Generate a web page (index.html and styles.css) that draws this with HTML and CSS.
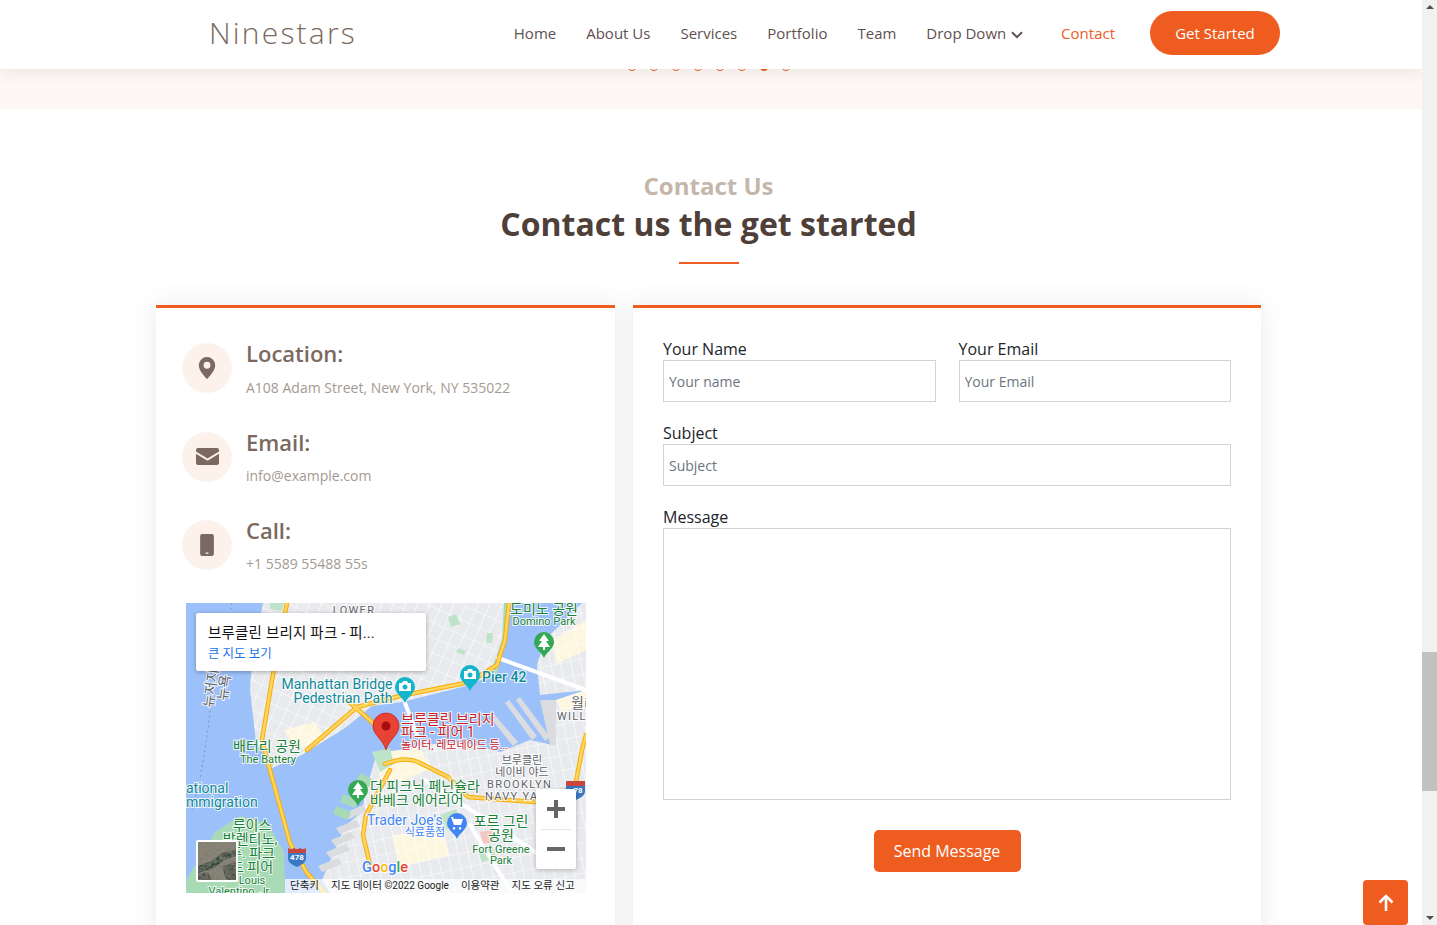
FILE: index.html
```html
<!DOCTYPE html>
<html lang="en">
<head>
  <meta charset="UTF-8" />
  <meta name="viewport" content="width=device-width, initial-scale=1" />
  <title>Ninestars</title>
  <link rel="stylesheet" href="styles.css">
</head>
<body>
  <div class="page">
    <header class="topbar">
      <a class="logo">Ninestars</a>
      <nav class="nav">
        <a>Home</a>
        <a>About Us</a>
        <a>Services</a>
        <a>Portfolio</a>
        <a>Team</a>
        <a class="drop">Drop Down
          <svg viewBox="0 0 12 8" width="12" height="8"><path d="M1 1.2l5 5 5-5" fill="none" stroke="#5f5050" stroke-width="2"/></svg>
        </a>
        <a class="active">Contact</a>
      </nav>
      <a class="get-started">Get Started</a>
    </header>

    <div class="band">
      <div class="dots">
        <i></i><i></i><i></i><i></i><i></i><i></i><i class="on"></i><i></i>
      </div>
    </div>

    <section class="contact">
      <div class="title">
        <h2>Contact Us</h2>
        <p>Contact us the get started</p>
      </div>

      <div class="columns">
        <div class="card info">
          <div class="info-row">
            <div class="circle">
              <svg viewBox="0 0 16 16" width="22" height="22"><path d="M8 16s6-5.686 6-10A6 6 0 0 0 2 6c0 4.314 6 10 6 10zm0-7.5a2.5 2.5 0 1 1 0-5 2.5 2.5 0 0 1 0 5z"/></svg>
            </div>
            <div>
              <h4>Location:</h4>
              <p>A108 Adam Street, New York, NY 535022</p>
            </div>
          </div>
          <div class="info-row">
            <div class="circle">
              <svg viewBox="0 0 23 17" width="23" height="17"><path d="M2 0h19a2 2 0 0 1 2 2v1.5l-11.500 7L0 3.500V2a2 2 0 0 1 2-2zM0 5.800l11.500 7 11.500-7V15a2 2 0 0 1-2 2H2a2 2 0 0 1-2-2z"/></svg>
            </div>
            <div>
              <h4>Email:</h4>
              <p>info@example.com</p>
            </div>
          </div>
          <div class="info-row">
            <div class="circle">
              <svg viewBox="0 0 16 16" width="22" height="22"><path d="M3 1.5A1.5 1.5 0 0 1 4.5 0h7A1.5 1.5 0 0 1 13 1.5v13a1.5 1.5 0 0 1-1.5 1.5h-7A1.5 1.5 0 0 1 3 14.500zM7 13.500v.8h2v-.8z"/></svg>
            </div>
            <div>
              <h4>Call:</h4>
              <p>+1 5589 55488 55s</p>
            </div>
          </div>

          <div class="map">
            <svg class="map-art" viewBox="186 603 400 290" width="400" height="290">
              <defs>
                <pattern id="grid" width="11" height="14" patternUnits="userSpaceOnUse" patternTransform="rotate(24)">
                  <path d="M0 0H11M0 0V14" stroke="#fff" stroke-width="1.2" fill="none"/>
                </pattern>
                <pattern id="gridb" width="10" height="15" patternUnits="userSpaceOnUse" patternTransform="rotate(-12)">
                  <path d="M0 0H10M0 0V15" stroke="#fff" stroke-width="1.2" fill="none"/>
                </pattern>
                <filter id="rough" x="0" y="0" width="100%" height="100%">
                  <feTurbulence type="fractalNoise" baseFrequency="0.35" numOctaves="2" seed="4"/>
                  <feColorMatrix values="0 0 0 0 .2  0 0 0 0 .2  0 0 0 0 .17  1.8 0 0 0 -.5"/>
                  <feComposite in2="SourceGraphic" operator="over"/>
                </filter>
              </defs>
              <rect x="186" y="603" width="400" height="290" fill="#9cc0f9"/>

              <!-- land -->
              <path d="M263 603L252 660L250 690L256 742L272 768L300 756L345 728L372 706L402 702L470 685L497 672L505 640L511 603Z" fill="#e8eaed"/>
              <path d="M586 603H582L545 640L537 665L540 695L586 690V893H330L322 880L345 826L362 812L366 790L376 756L420 745L462 742L500 752L530 740L552 745L556 700L586 690Z" fill="#e8eaed"/>
              <path d="M284 730l30-8 12 16-30 12zM552 640l34-20v30l-30 14zM392 835l50-4 8 24-50 12zM556 700l30-10v14l-24 8zM380 752l40-4 12 20-30 14-22-4z" fill="#fef7e0"/>
              <path d="M263 603L252 660L250 690L256 742L272 768L300 756L345 728L372 706L402 702L470 685L497 672L505 640L511 603Z" fill="url(#grid)"/>
              <path d="M586 603H582L545 640L537 665L540 695L586 690V893H330L322 880L345 826L362 812L366 790L376 756L420 745L462 742L500 752L530 740L552 745L556 700L586 690Z" fill="url(#gridb)"/>
              <path d="M186 893V880L200 858L215 832L240 816L268 824L284 852L285 893Z" fill="#a8dab5"/>

              <!-- piers and yard -->
              <path d="M505 703l4-3 28 36-5 4zM516 700l4-3 30 40-5 4zM490 717l4-3 24 28-5 4zM540 700h16v45h-6z" fill="#dadce0"/>
              <path d="M336 828l20-8 4 6-20 8zM331 840l20-8 4 6-20 8zM326 852l20-8 4 6-20 8zM318 866l20-8 4 6-20 8zM345 813l18-8 4 6-18 8z" fill="#dadce0"/>
              <path d="M343 794l15 6-3 8-15-6zM336 806l15 6-3 8-15-6zM360 773l12 6-3 8-12-6z" fill="#a8dab5"/>

              <!-- parks -->
              <path d="M510 603L505 640L497 672L488 680L502 640L504 603Z" fill="#a8dab5"/>
              <path d="M270 603l14 0-2 8-12-2zM448 617l8-3 4 10-9 3zM487 633l6 0-1 10-6-1zM458 648l8 3-2 4-8-3z" fill="#bfe3c8"/>
              <path d="M372 752l18-4 4 16-14 8zM440 815l16-6 6 16-16 4zM478 850l14-4 4 12-14 4zM262 760l6-4 6 10-6 2z" fill="#bfe3c8"/>
              <path d="M480 832l12-2 3 12-12 2z" fill="#f6c6c2"/>

              <!-- roads -->
              <g fill="none" stroke-linejoin="round" stroke-linecap="round">
                <path d="M498 658L586 690M405 703L417 735M425 780L560 868M470 825L512 893" stroke="#fff" stroke-width="4"/>
                <g stroke="#f9ab00" stroke-width="4.5">
                  <path d="M287 603L272 680L262 740L270 770L290 843L307 873L325 893"/>
                  <path d="M307 750L357 707L400 696L470 682L497 665L505 640L509 603"/>
                  <path d="M347 700L373 723"/>
                  <path d="M385 764Q405 756 418 762L448 777L468 797L535 802L575 787L582 750L586 735"/>
                  <path d="M390 770L366 815L363 835L370 865"/>
                </g>
                <g stroke="#fdd663" stroke-width="2.5">
                  <path d="M287 603L272 680L262 740L270 770L290 843L307 873L325 893"/>
                  <path d="M307 750L357 707L400 696L470 682L497 665L505 640L509 603"/>
                  <path d="M347 700L373 723"/>
                  <path d="M385 764Q405 756 418 762L448 777L468 797L535 802L575 787L582 750L586 735"/>
                  <path d="M390 770L366 815L363 835L370 865"/>
                </g>
              </g>
              <path d="M232 603L212 690L208 730L200 780L192 810" fill="none" stroke="#7f97b8" stroke-width="1" stroke-dasharray="2 3"/>

              <!-- pins -->
              <path d="M470 691c-2-6-10-9-10-16a10 10 0 1 1 20 0c0 7-8 10-10 16z" fill="#12b5cb"/>
              <path d="M464 671h3l1-2h4l1 2h3v8h-12zm6 1.5a2.5 2.5 0 1 0 .01 0z" fill="#fff" fill-rule="evenodd"/>
              <path d="M405 703c-2-6-10-9-10-16a10 10 0 1 1 20 0c0 7-8 10-10 16z" fill="#12b5cb"/>
              <path d="M399 683h3l1-2h4l1 2h3v8h-12zm6 1.5a2.5 2.5 0 1 0 .01 0z" fill="#fff" fill-rule="evenodd"/>
              <path d="M544 658c-2-6-10-9-10-16a10 10 0 1 1 20 0c0 7-8 10-10 16z" fill="#34a853"/>
              <path d="M544 634l-5 7h3l-4 6h5v3h2v-3h5l-4-6h3z" fill="#fff"/>
              <path d="M358 806c-2-6-10-9-10-16a10 10 0 1 1 20 0c0 7-8 10-10 16z" fill="#34a853"/>
              <path d="M358 782l-5 7h3l-4 6h5v3h2v-3h5l-4-6h3z" fill="#fff"/>
              <path d="M457 839c-2-6-10-9-10-16a10 10 0 1 1 20 0c0 7-8 10-10 16z" fill="#4285f4"/>
              <path d="M451 817h2l1 2h9l-2 6h-7zM454 827a1.3 1.3 0 1 0 .01 0zM460 827a1.3 1.3 0 1 0 .01 0z" fill="#fff"/>
              <path d="M386 750c-3-11-13-15-13-24a13 13 0 1 1 26 0c0 9-10 13-13 24z" fill="#ea4335" stroke="#c5221f" stroke-width=".8"/>
              <circle cx="386" cy="726" r="4.5" fill="#a50e0e"/>

              <!-- shields -->
              <path d="M288 849h18v9c0 5-5 7-9 9-4-2-9-4-9-9z" fill="#3b78c4"/>
              <path d="M288 848l3 1.5 3-1.5 3 1.5 3-1.5 3 1.5 3-1.5v5h-18z" fill="#c9453e"/>
              <text class="t shield" x="297" y="860">478</text>
              <path d="M566 782h19v9c0 5-5 7-9 9-4-2-10-4-10-9z" fill="#3b78c4"/>
              <path d="M566 781h19v5h-19z" fill="#c9453e"/>
              <text class="t shield" x="578" y="793">78</text>

              <!-- labels -->
              <g class="t">
                <text class="grey spaced" x="354" y="614" text-anchor="middle">LOWER</text>
                <text class="green big" x="544" y="614" text-anchor="middle">도미노 공원</text>
                <text class="green small" x="544" y="625" text-anchor="middle">Domino Park</text>
                <text class="teal bold" x="482" y="682">Pier 42</text>
                <text class="teal" x="337" y="689" text-anchor="middle">Manhattan Bridge</text>
                <text class="teal" x="343" y="703" text-anchor="middle">Pedestrian Path</text>
                <text class="grey big" transform="translate(213 708) rotate(-82)">뉴저지</text>
                <text class="grey big" transform="translate(227 701) rotate(-82)">뉴욕</text>
                <text class="red big" x="401" y="724">브루클린 브리지</text>
                <text class="red big" x="401" y="737">파크 - 피어 1</text>
                <text class="red tiny" x="401" y="749">놀이터, 레모네이드 등...</text>
                <text class="green big" x="267" y="751" text-anchor="middle">배터리 공원</text>
                <text class="green small" x="268" y="763" text-anchor="middle">The Battery</text>
                <text class="grey big" x="571" y="708">월리</text>
                <text class="grey spaced" x="557" y="720">WILL</text>
                <text class="grey small" x="522" y="764" text-anchor="middle">브루클린</text>
                <text class="grey small" x="522" y="776" text-anchor="middle">네이비 야드</text>
                <text class="grey spaced" x="487" y="788">BROOKLYN</text>
                <text class="grey spaced" x="485" y="800">NAVY YA</text>
                <text class="green big" x="370" y="791">더 피크닉 페닌슐라</text>
                <text class="green big" x="370" y="805">바베크 에어리어</text>
                <text class="teal" x="186" y="793">ational</text>
                <text class="teal" x="186" y="807">mmigration</text>
                <text class="green big" x="252" y="830" text-anchor="middle">루이스</text>
                <text class="green big" x="250" y="844" text-anchor="middle">발렌티노,</text>
                <text class="green big" x="252" y="858" text-anchor="middle">주. 파크</text>
                <text class="green big" x="252" y="872" text-anchor="middle">드 피어</text>
                <text class="green small" x="252" y="884" text-anchor="middle">Louis</text>
                <text class="green small" x="240" y="895" text-anchor="middle">Valentino, Jr.</text>
                <text class="blue" x="367" y="825">Trader Joe's</text>
                <text class="blue tiny" x="425" y="836" text-anchor="middle">식료품점</text>
                <text class="green big" x="501" y="826" text-anchor="middle">포르 그린</text>
                <text class="green big" x="501" y="840" text-anchor="middle">공원</text>
                <text class="green small" x="501" y="853" text-anchor="middle">Fort Greene</text>
                <text class="green small" x="501" y="864" text-anchor="middle">Park</text>
                <text class="goog" x="362" y="872"><tspan fill="#4285f4">G</tspan><tspan fill="#ea4335">o</tspan><tspan fill="#fbbc04">o</tspan><tspan fill="#4285f4">g</tspan><tspan fill="#34a853">l</tspan><tspan fill="#ea4335">e</tspan></text>
              </g>

              <!-- satellite thumb -->
              <rect x="196" y="840" width="42" height="42" rx="2" fill="#fff"/>
              <g filter="url(#rough)">
                <rect x="198" y="842" width="38" height="38" fill="#8d8677"/>
                <path d="M198 866l14-5 10-8 14-3v6l-12 4-10 8-16 5z" fill="#2c4438"/>
                <path d="M198 874l10-2 4 8h-14zM222 866l14-4v18h-10z" fill="#4a4f42"/>
              </g>
            </svg>

            <div class="map-card">
              <div class="map-name">브루클린 브리지 파크 - 피...</div>
              <a class="map-link">큰 지도 보기</a>
            </div>

            <div class="zoom-box">
              <div class="zoom-btn"><svg viewBox="0 0 18 18" width="18" height="18"><path d="M7 0h4v7h7v4h-7v7H7v-7H0V7h7z" fill="#666"/></svg></div>
              <div class="zoom-line"></div>
              <div class="zoom-btn"><svg viewBox="0 0 18 18" width="18" height="18"><path d="M0 7h18v4H0z" fill="#666"/></svg></div>
            </div>

            <div class="map-foot">
              <span>단축키</span>
              <span>지도 데이터 <small>©2022 Google</small></span>
              <span>이용약관</span>
              <span>지도 오류 신고</span>
            </div>
          </div>
        </div>

        <form class="card form">
          <div class="form-row">
            <label class="field">Your Name
              <input type="text" placeholder="Your name">
            </label>
            <label class="field">Your Email
              <input type="text" placeholder="Your Email">
            </label>
          </div>
          <label class="field">Subject
            <input type="text" placeholder="Subject">
          </label>
          <label class="field">Message
            <textarea></textarea>
          </label>
          <div class="send-row">
            <button type="button" class="send">Send Message</button>
          </div>
        </form>
      </div>
    </section>

    <a class="back-top">
      <svg viewBox="0 0 20 20" width="20" height="20"><path d="M10 18V3M3.5 9.5L10 3l6.5 6.5" fill="none" stroke="#fff" stroke-width="2.6"/></svg>
    </a>
  </div>

  <div class="scrollbar">
    <span class="arrow-up"></span>
    <span class="thumb"></span>
    <span class="arrow-down"></span>
  </div>
</body>
</html>
```

FILE: styles.css
```css
html, body {
  margin: 0;
  height: 100%;
  overflow: hidden;
}
body {
  font-family: "Open Sans", sans-serif;
  display: flex;
  background: #fff;
  color: #5f5050;
}
.page {
  flex: 1;
  position: relative;
  height: 925px;
  overflow: hidden;
}

/* top bar */
.topbar {
  height: 69px;
  box-sizing: border-box;
  padding: 0 142px 4px 209px;
  display: flex;
  align-items: center;
  position: relative;
  z-index: 2;
  background: #fff;
  box-shadow: 0 2px 15px rgba(95, 80, 80, 0.12);
}
.logo {
  font-size: 30px;
  font-weight: 300;
  letter-spacing: 2.2px;
  color: #7a6960;
}
.nav {
  display: flex;
  gap: 30px;
  margin-left: auto;
  font-size: 15px;
}
.nav .drop {
  margin-right: 8px;
}
.nav .drop svg {
  margin-left: 1px;
}
.nav .active {
  color: #ee5c1f;
}
.get-started {
  width: 130px;
  height: 44px;
  margin-left: 35px;
  border-radius: 22px;
  background: #ee5c1f;
  color: #fff;
  font-size: 15px;
  font-weight: 500;
  display: flex;
  align-items: center;
  justify-content: center;
}

/* band under the bar */
.band {
  height: 40px;
  background: #fdf8f5;
}
.dots {
  width: 1105px;
  margin-left: 156px;
  display: flex;
  justify-content: center;
  gap: 12px;
  transform: translateY(-8px);
}
.dots i {
  width: 10px;
  height: 10px;
  box-sizing: border-box;
  border: 1px solid #ee5c1f;
  border-radius: 50%;
}
.dots i.on {
  background: #ee5c1f;
}

/* section */
.contact {
  width: 1105px;
  margin-left: 156px;
}
.title {
  box-sizing: border-box;
  height: 196px;
  padding-top: 59px;
  text-align: center;
}
.title h2 {
  margin: 0;
  font-size: 24px;
  line-height: 35px;
  font-weight: 700;
  color: #c4b6a9;
}
.title p {
  margin: 0;
  font-size: 32px;
  line-height: 42px;
  font-weight: 700;
  color: #4e4039;
}
.title p::after {
  content: "";
  display: block;
  width: 60px;
  height: 2px;
  margin: 17px auto 0;
  background: #ee5c1f;
}
.columns {
  display: flex;
  gap: 18px;
}
.card {
  box-sizing: border-box;
  background: #fff;
  border-top: 3px solid #ee5c1f;
  box-shadow: 0 0 24px rgba(95, 80, 80, 0.12);
  height: 700px;
}

/* left card */
.info {
  width: 459px;
  padding: 35px 26px 0;
}
.info-row {
  display: flex;
  gap: 14px;
  height: 88.5px;
}
.info-row:nth-child(3) {
  height: 83px;
}
.circle {
  width: 50px;
  height: 50px;
  flex: none;
  border-radius: 50%;
  background: #fdf1ec;
  display: flex;
  align-items: center;
  justify-content: center;
}
.circle svg {
  fill: #7a6960;
}
.info-row h4 {
  margin: -1px 0 0;
  font-size: 22px;
  line-height: 22px;
  font-weight: 600;
  color: #7a6960;
}
.info-row p {
  margin: 13px 0 0;
  font-size: 14px;
  line-height: 20px;
  color: #a49a91;
}
.info-row:first-child p {
  margin-top: 14px;
}
.map {
  position: relative;
  width: 400px;
  height: 290px;
  margin-left: 4px;
  overflow: hidden;
  font-family: Roboto, "Noto Sans CJK KR", sans-serif;
}
.map-art {
  display: block;
}
.t text, text.t {
  font-family: Roboto, "Noto Sans CJK KR", sans-serif;
  paint-order: stroke;
  stroke: rgba(255, 255, 255, 0.85);
  stroke-width: 2px;
  font-size: 14px;
}
.t .big { font-size: 14px; }
.t .small { font-size: 11px; }
.t .tiny { font-size: 11px; }
.t .bold { font-weight: 500; }
.t .green { fill: #188038; }
.t .teal { fill: #0e8a9a; }
.t .red { fill: #c5221f; }
.t .blue { fill: #4285f4; }
.t .grey { fill: #5f6368; }
.t .spaced { font-size: 11px; letter-spacing: 1.3px; }
.t .goog { font-size: 14.5px; font-weight: 500; }
text.shield {
  font-size: 8px;
  font-weight: 700;
  fill: #fff;
  stroke: none;
  text-anchor: middle;
}
.map-card {
  position: absolute;
  left: 10px;
  top: 10px;
  width: 230px;
  height: 58px;
  box-sizing: border-box;
  padding: 12px 12px;
  background: #fff;
  border-radius: 2px;
  box-shadow: 0 1px 4px rgba(0, 0, 0, 0.3);
}
.map-name {
  font-size: 14.5px;
  line-height: 18px;
  letter-spacing: 0.2px;
  color: #111;
}
.map-link {
  display: block;
  margin-top: 4px;
  font-size: 12.5px;
  line-height: 14px;
  color: #1a73e8;
}
.zoom-box {
  position: absolute;
  left: 350px;
  top: 186px;
  width: 40px;
  height: 80px;
  background: #fff;
  border-radius: 2px;
  box-shadow: 0 1px 4px rgba(0, 0, 0, 0.25);
}
.zoom-btn {
  height: 39.5px;
  display: flex;
  align-items: center;
  justify-content: center;
}
.zoom-line {
  height: 1px;
  margin: 0 5px;
  background: #e6e6e6;
}
.map-foot {
  position: absolute;
  right: 0;
  bottom: 0;
  left: 99px;
  height: 14px;
  padding-left: 5px;
  display: flex;
  gap: 12px;
  font-size: 10.5px;
  line-height: 14px;
  color: #222;
  background: rgba(255, 255, 255, 0.7);
  white-space: nowrap;
}
.map-foot small {
  font-size: 10px;
}

/* right card */
.form {
  width: 628px;
  padding: 31px 30px 0;
  display: flex;
  flex-direction: column;
  gap: 21px;
}
.form-row {
  display: flex;
  gap: 23px;
}
.form-row .field {
  flex: 1;
}
.field {
  display: block;
  font-size: 16px;
  line-height: 21px;
  color: #212529;
}
.field input,
.field textarea {
  display: block;
  width: 100%;
  box-sizing: border-box;
  height: 42px;
  padding: 0 5px;
  border: 1px solid #ced4da;
  background: #fff;
  font-family: "Open Sans", sans-serif;
  font-size: 14px;
  color: #6c757d;
  resize: none;
  outline: none;
}
.field input::placeholder {
  color: #6c757d;
  opacity: 1;
}
.field textarea {
  height: 272px;
}
.send-row {
  display: flex;
  justify-content: center;
  margin-top: 9px;
}
.send {
  width: 147px;
  height: 42px;
  border: 0;
  border-radius: 5px;
  background: #ee5c1f;
  color: #fff;
  font-family: "Open Sans", sans-serif;
  font-size: 16px;
  font-weight: 500;
}

/* floating back to top */
.back-top {
  position: absolute;
  right: 14px;
  bottom: 0;
  width: 45px;
  height: 45px;
  border-radius: 4px;
  background: #ee5c1f;
  display: flex;
  align-items: center;
  justify-content: center;
}

/* fake scrollbar */
.scrollbar {
  width: 15px;
  height: 925px;
  flex: none;
  background: #f1f1f1;
  position: relative;
}
.thumb {
  position: absolute;
  left: 0;
  top: 652px;
  width: 15px;
  height: 139px;
  background: #c1c1c1;
}
.arrow-up,
.arrow-down {
  position: absolute;
  left: 4px;
  width: 0;
  height: 0;
  border-left: 4px solid transparent;
  border-right: 4px solid transparent;
}
.arrow-up {
  top: 5px;
  border-bottom: 4px solid #505050;
}
.arrow-down {
  bottom: 5px;
  border-top: 4px solid #505050;
}
```
